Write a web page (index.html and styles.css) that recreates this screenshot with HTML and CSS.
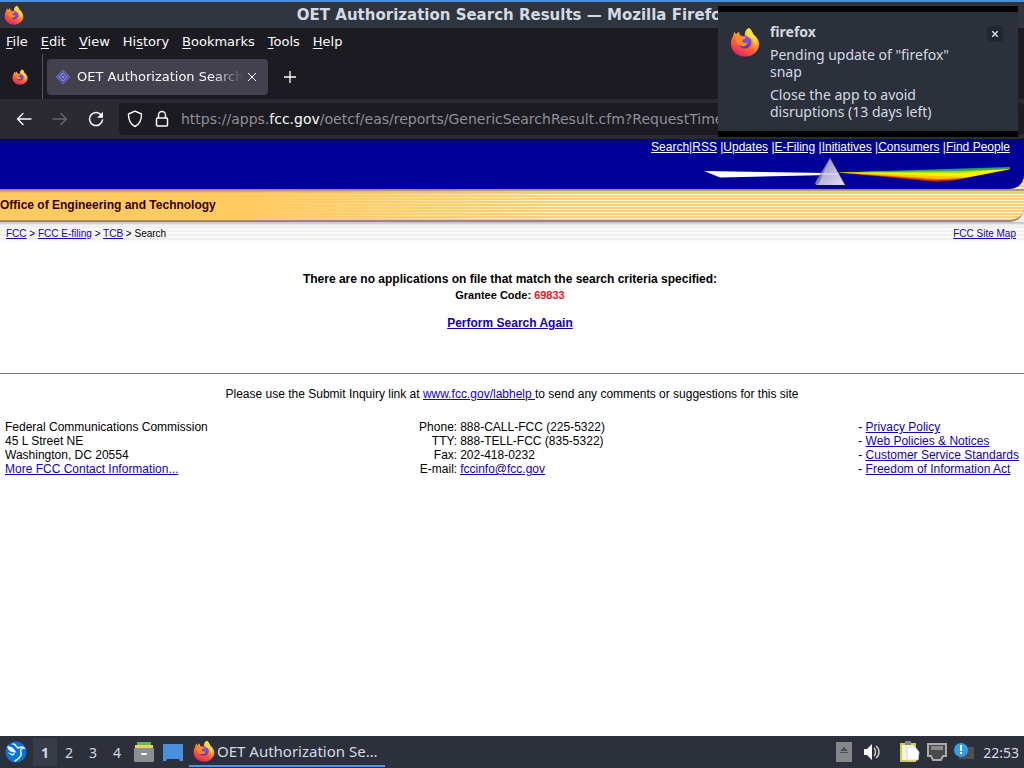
FILE: index.html
```html
<!DOCTYPE html>
<html lang="en">
<head>
    <meta charset="UTF-8">
    <meta name="viewport" content="width=device-width, initial-scale=1.0">
    <title>OET Authorization Search Results</title>
    <link rel="stylesheet" href="styles.css">
</head>
<body>
    <!-- shared firefox logo -->
    <svg class="defs" width="0" height="0" aria-hidden="true">
        <defs>
            <linearGradient id="flame" x1="0.8" y1="0.05" x2="0.3" y2="1">
                <stop offset="0" stop-color="#fff04a"/>
                <stop offset="0.35" stop-color="#ffa52e"/>
                <stop offset="0.65" stop-color="#ff5a36"/>
                <stop offset="1" stop-color="#e0206c"/>
            </linearGradient>
            <linearGradient id="globe" x1="0.7" y1="0" x2="0.3" y2="1">
                <stop offset="0" stop-color="#9a50e8"/>
                <stop offset="1" stop-color="#4a3fae"/>
            </linearGradient>
            <symbol id="firefox" viewBox="0 0 32 32">
                <path fill="url(#flame)" d="M20 1c2 1 4 4 4.500 6.500C28 10 31 14 31 18c0 7.500-6.500 13.500-15 13.500S1 25.500 1 17.500c0-3.500 1-6 2.500-8 0-2 .5-3.500 1.500-4.500 0 1 .5 2 1.500 2.500C7.500 7 8.500 5.500 10 5c-.3 1.500 0 3 1 4l5 1c-1-4 1-7.500 4-9z"/>
                <circle cx="16" cy="16" r="7" fill="url(#globe)"/>
                <path fill="#ff8a30" d="M6 9c2-1 5-.5 6.500 1 2 .2 4 0 5 1-1 2-4 2-4.500 3.500 0 2 3 3 6 2-1 3-4 5-8 3.500C7 18.500 5 13 6 9z"/>
                <path fill="#ffdc3c" d="M20 1c2 1 4 4 4.500 6.500 4 4 5 9 2 14 .5-4-1-7-4-9.500C19 10.500 14.500 9 20 1z"/>
            </symbol>
        </defs>
    </svg>

    <div class="titlebar">
        <svg class="app-icon"><use href="#firefox"/></svg>
        <span class="window-title">OET Authorization Search Results — Mozilla Firefox</span>
    </div>

    <nav class="menubar">
        <button><u>F</u>ile</button>
        <button><u>E</u>dit</button>
        <button><u>V</u>iew</button>
        <button>Hi<u>s</u>tory</button>
        <button><u>B</u>ookmarks</button>
        <button><u>T</u>ools</button>
        <button><u>H</u>elp</button>
    </nav>

    <div class="tabbar">
        <button class="view-btn" aria-label="Firefox View"><svg width="16" height="16"><use href="#firefox"/></svg></button>
        <div class="tab">
            <svg width="16" height="16" viewBox="0 0 16 16" fill="none" stroke="#6668bc">
                <path fill="#5658a8" d="M8 1l7 7-7 7-7-7z"/>
                <path stroke="#8688d8" d="M8 4l4 4-4 4-4-4zM8 7l1 1-1 1-1-1z"/>
            </svg>
            <span class="tab-title">OET Authorization Search</span>
            <button class="tab-close" aria-label="Close tab">
                <svg width="10" height="10" viewBox="0 0 10 10" stroke="#fbfbfe"><path d="M1 1l8 8M9 1l-8 8"/></svg>
            </button>
        </div>
        <button class="new-tab" aria-label="New tab">
            <svg width="12" height="12" viewBox="0 0 12 12" stroke="#fbfbfe" stroke-width="1.300"><path d="M6 0v12M0 6h12"/></svg>
        </button>
    </div>

    <div class="toolbar">
        <button aria-label="Back">
            <svg width="16" height="16" viewBox="0 0 16 16" fill="none" stroke="#fbfbfe" stroke-width="1.400" stroke-linecap="round" stroke-linejoin="round"><path d="M15 8H1.500M7 2.500L1.500 8 7 13.500"/></svg>
        </button>
        <button aria-label="Forward" disabled>
            <svg width="16" height="16" viewBox="0 0 16 16" fill="none" stroke="#66666f" stroke-width="1.400" stroke-linecap="round" stroke-linejoin="round"><path d="M1 8h13.500M9 2.500L14.500 8 9 13.500"/></svg>
        </button>
        <button aria-label="Reload">
            <svg width="16" height="16" viewBox="0 0 16 16" fill="none" stroke="#fbfbfe" stroke-width="1.500" stroke-linecap="round"><path d="M13.500 4.500A6.500 6.500 0 1 0 14.500 9"/><path fill="#fbfbfe" stroke="none" d="M15 .8v6H9z"/></svg>
        </button>
        <div class="urlbar">
            <svg width="16" height="18" viewBox="0 0 16 18" fill="none" stroke="#fbfbfe" stroke-width="1.400" stroke-linejoin="round"><path d="M8 1.200l6.500 2.800c.2 5.500-1.500 10-6.500 12.500C3 14 1.300 9.500 1.500 4z"/></svg>
            <svg width="14" height="18" viewBox="0 0 14 18" fill="none" stroke="#fbfbfe" stroke-width="1.500" stroke-linejoin="round"><rect x="1.500" y="8" width="11" height="8" rx="1"/><path d="M3.500 8V5a3.500 3.500 0 0 1 7 0v3"/></svg>
            <span class="url">https://apps.<b>fcc.gov</b>/oetcf/eas/reports/GenericSearchResult.cfm?RequestTimeout=500</span>
        </div>
    </div>

    <div class="page">
        <div class="banner">
            <header>
                <p><a href="#">Search</a>|<a href="#">RSS</a> |<a href="#">Updates</a> |<a href="#">E-Filing</a> |<a href="#">Initiatives</a> |<a href="#">Consumers</a> |<a href="#">Find People</a></p>
                <svg width="308" height="30" viewBox="0 0 308 30">
                    <defs>
                        <linearGradient id="glass" x1="0" y1="0" x2="1" y2="1">
                            <stop offset="0" stop-color="#8886a8"/>
                            <stop offset="0.55" stop-color="#bdb8dc"/>
                            <stop offset="1" stop-color="#e4dff0"/>
                        </linearGradient>
                    </defs>
                    <path fill="#fff" d="M2 14l16 6.500 108-2.500v-2z"/>
                    <!-- rays fan out of the prism, red at the bottom -->
                    <path fill="#a01818" d="M136 15.500l98 9.500 16-1 58-12z"/>
                    <path fill="#f06000" d="M136 15.500l95 8 23-1 54-10z"/>
                    <path fill="#ffc800" d="M136 15.500l100 6.500 26-1 46-9z"/>
                    <path fill="#f4f400" d="M136 15.500l130 4.500 42-8-60 1z"/>
                    <path fill="#a0e010" d="M136 15.500l122 .5 50-4.500-50 2z"/>
                    <path fill="#30a060" d="M136 15.500L308 10v2l-50 2z"/>
                    <path fill="url(#glass)" d="M128 1l15 27h-29z"/>
                    <path fill="#7e7ca6" d="M128 1l-11 25-3 2-1-2z"/>
                    <path stroke="#f0e4f4" d="M119 17h18"/>
                </svg>
            </header>
        </div>
        <div class="office-wrap">
            <h1>Office of Engineering and Technology</h1>
        </div>
        <div class="crumbs">
            <span><a href="#">FCC</a> &gt; <a href="#">FCC E-filing</a> &gt; <a href="#">TCB</a> &gt; Search</span>
            <a href="#">FCC Site Map</a>
        </div>

        <main>
            <h2>There are no applications on file that match the search criteria specified:</h2>
            <p class="code">Grantee Code: <span>69833</span></p>
            <a href="#">Perform Search Again</a>
        </main>

        <footer>
            <p>Please use the Submit Inquiry link at <a href="#">www.fcc.gov/labhelp </a>to send any comments or suggestions for this site</p>
            <div class="footer-cols">
                <address>
                    Federal Communications Commission<br>
                    45 L Street NE<br>
                    Washington, DC 20554<br>
                    <a href="#">More FCC Contact Information...</a>
                </address>
                <table>
                    <tr><th>Phone:</th><td>888-CALL-FCC (225-5322)</td></tr>
                    <tr><th>TTY:</th><td>888-TELL-FCC (835-5322)</td></tr>
                    <tr><th>Fax:</th><td>202-418-0232</td></tr>
                    <tr><th>E-mail:</th><td><a href="#">fccinfo@fcc.gov</a></td></tr>
                </table>
                <ul>
                    <li>- <a href="#">Privacy Policy</a></li>
                    <li>- <a href="#">Web Policies &amp; Notices</a></li>
                    <li>- <a href="#">Customer Service Standards</a></li>
                    <li>- <a href="#">Freedom of Information Act</a></li>
                </ul>
            </div>
        </footer>
    </div>

    <div class="taskbar">
        <button class="start" aria-label="Menu">
            <svg width="22" height="22" viewBox="0 0 22 22"><circle cx="11" cy="11" r="10.500" fill="#0a72d8"/><path fill="#f0f8ff" d="M2 5c4 0 7 2 9 6-1 1-2 1-3 0C5 11 3 9 2 5zM3 11c3 2 5 2 7 1l-1 2c-2 1-4 0-6-3z"/><path fill="none" stroke="#f0f8ff" stroke-width="1.500" stroke-linecap="round" d="M8 3c3 0 3 3 5 4 2-1 4-2 6 0-3 0-4 2-3 5s-1 5-6 8"/></svg>
        </button>
        <button class="desk active">1</button>
        <button class="desk">2</button>
        <button class="desk">3</button>
        <button class="desk">4</button>
        <button class="launcher" aria-label="Files">
            <svg width="20" height="20" viewBox="0 0 20 20"><path fill="#68b45a" d="M3 0h14v4H3z"/><path fill="#e8d35c" d="M1 3h18v3H1z"/><rect y="6" width="20" height="14" rx="1" fill="#8c8e90"/><rect x="7" y="11" width="6" height="2" rx="1" fill="#fff"/></svg>
        </button>
        <button class="launcher" aria-label="Show desktop">
            <svg width="20" height="17" viewBox="0 0 20 17"><path fill="#4a90dc" d="M0 0h20v17h-3l-1-2H4l-1 2H0z"/></svg>
        </button>
        <button class="task">
            <svg width="22" height="22"><use href="#firefox"/></svg>
            <span>OET Authorization Se…</span>
        </button>
        <div class="tray">
            <svg width="16" height="20" viewBox="0 0 16 20"><rect width="16" height="20" fill="#85878b"/><path fill="#4a4c52" d="M8 5l4 4H4zM4 10h8v1H4z"/></svg>
            <svg class="volume" width="16" height="16" viewBox="0 0 16 16"><path fill="#fff" d="M0 5h3l5-5v16l-5-5H0z"/><path fill="none" stroke="#ccc" stroke-width="1.500" d="M10 4c2 2 2 6 0 8M12 2c4 3 4 9 0 12"/></svg>
            <svg width="20" height="22" viewBox="0 0 20 22"><rect y="2" width="16" height="19" fill="#d2cf35"/><path fill="#f2f2e6" d="M2 4h12v15H2z"/><path fill="#888" d="M5 0h6v4H5z"/><path fill="#fff" stroke="#d8d8d8" d="M7 6h8l4 5-1 8H7z"/></svg>
            <svg width="20" height="18" viewBox="0 0 20 18"><path fill="#4a4a4a" stroke="#a9a9a9" stroke-width="2" d="M1 1h18v12h-3l-2 4H6l-2-4H1z"/><path stroke="#ccc" d="M5 3v4M7 3v4M9 3v4M11 3v4M13 3v4M15 3v4"/></svg>
            <svg width="20" height="18" viewBox="0 0 20 18"><path fill="#4a4f58" d="M5 4h15v12H5z"/><circle cx="7" cy="7" r="7" fill="#35a0e0"/><path fill="#fff" d="M6 2h2v6H6zM6 9h2v2H6z"/></svg>
            <time>22:53</time>
        </div>
    </div>

    <div class="notification">
        <svg width="30" height="30"><use href="#firefox"/></svg>
        <div class="notice-text">
            <strong>firefox</strong>
            <p>Pending update of "firefox" snap</p>
            <p>Close the app to avoid disruptions (13 days left)</p>
        </div>
        <button aria-label="Dismiss">
            <svg width="6" height="6" viewBox="0 0 6 6" stroke="#d3dae3" stroke-width="1.500"><path d="M0 0l6 6M6 0L0 6"/></svg>
        </button>
    </div>
</body>
</html>
```
FILE: styles.css
```css
* {
    margin: 0;
    padding: 0;
    box-sizing: border-box;
}

body {
    min-height: 100vh;
    display: flex;
    flex-direction: column;
    background: #fff;
    font-family: "Noto Sans", sans-serif;
    font-size: 14px;
    color: #fbfbfe;
}

button {
    background: none;
    border: none;
    color: inherit;
    font: inherit;
}

svg {
    display: block;
    flex: none;
}

.defs {
    position: absolute;
}

/* window chrome */
.titlebar {
    height: 28px;
    display: flex;
    align-items: center;
    padding: 0 20px 0 4px;
    border-top: 2px solid #4a90d9;
    background: #2f343f;
}

.app-icon {
    width: 20px;
    height: 20px;
}

.window-title {
    flex: 1;
    text-align: center;
    font: bold 15px/20px "DejaVu Sans", sans-serif;
    color: #d3dae3;
    white-space: nowrap;
}

.menubar {
    display: flex;
    gap: 13px;
    height: 26px;
    padding-left: 6px;
    background: #1c1b22;
    font-family: "DejaVu Sans", sans-serif;
    font-size: 13px;
}

.menubar u {
    text-underline-offset: 2px;
}

.tabbar {
    display: flex;
    align-items: center;
    height: 45px;
    background: #1c1b22;
}

.view-btn {
    height: 45px;
    padding: 0 14px 0 12px;
    border-right: 1px solid #55545c;
}

.tab {
    display: flex;
    align-items: center;
    width: 221px;
    height: 36px;
    margin-left: 4px;
    padding: 0 8px;
    background: #42414d;
    border-radius: 4px;
}

.tab-title {
    flex: 1;
    margin-left: 6px;
    white-space: nowrap;
    font-family: "DejaVu Sans", sans-serif;
    font-size: 13px;
    -webkit-mask-image: linear-gradient(to left, transparent, #000 32px);
    mask-image: linear-gradient(to left, transparent, #000 32px);
}

.tab-close {
    padding: 3px;
}

.new-tab {
    padding: 10px 16px;
}

.toolbar {
    display: flex;
    align-items: center;
    height: 40px;
    background: #2b2a33;
}

.toolbar button {
    width: 36px;
    padding: 10px;
}

.toolbar button:first-child {
    margin-left: 6px;
}

.urlbar {
    flex: 1;
    display: flex;
    align-items: center;
    gap: 12px;
    height: 32px;
    min-width: 0;
    margin-left: 5px;
    padding-left: 8px;
    background: #1c1b22;
    border-radius: 4px;
}

.url {
    overflow: hidden;
    white-space: nowrap;
    font-family: "DejaVu Sans", sans-serif;
    color: #8f8f97;
}

.url b {
    font-weight: normal;
    color: #fbfbfe;
}

/* fcc page */
.page {
    flex: 1;
    background: #fff;
    color: #000;
    font: 12px/14px "Liberation Sans", Arial, sans-serif;
}

.page a {
    color: #1400b4;
}

.banner {
    background: repeating-linear-gradient(#fff2cc 0 2px, #fbcf70 2px 4px);
}

header {
    display: flex;
    flex-direction: column;
    align-items: flex-end;
    height: 50px;
    padding: 1px 14px 0 0;
    background: #000099;
    border-bottom-right-radius: 14px;
    color: #fff;
}

header svg {
    margin-top: 3px;
}

.page header a {
    color: #fff;
}

.office-wrap {
    background: #eee;
}

h1 {
    height: 33px;
    font-size: 12px;
    line-height: 32px;
    background:
        linear-gradient(#00006666, transparent 4px),
        linear-gradient(to right, #ffca60 240px, #ffca6000 560px),
        repeating-linear-gradient(#fbd27a 0 2px, #fff2cc 2px 3px);
    border-bottom: 2px solid #a08870;
    border-bottom-right-radius: 14px;
    color: #330000;
}

.crumbs {
    display: flex;
    justify-content: space-between;
    padding: 5px 8px 0 6px;
    font-size: 10px;
    background:
        linear-gradient(#00000033, transparent 4px),
        repeating-linear-gradient(#f0f0f0 0 2px, #fafafa 2px 4px);
}

main {
    padding: 31px 4px 43px 0;
    text-align: center;
    font-weight: bold;
}

h2 {
    font-size: 12px;
}

.code {
    margin: 2px 0 14px;
    font-size: 11px;
}

.code span {
    color: #e8141c;
}

footer {
    padding: 13px 5px;
    border-top: 1px solid #777;
    text-align: center;
}

.footer-cols {
    display: grid;
    grid-template-columns: 1fr auto 1fr;
    margin-top: 19px;
    text-align: left;
}

address {
    font-style: normal;
}

.page table {
    border-collapse: collapse;
}

th {
    padding-right: 3px;
    font-weight: normal;
    text-align: right;
}

ul {
    justify-self: end;
    list-style: none;
}

/* bottom panel */
.taskbar {
    display: flex;
    align-items: center;
    height: 32px;
    padding: 0 5px;
    background: #2b303b;
    color: #d3dae3;
}

.desk {
    width: 24px;
    height: 28px;
}

.start {
    margin-right: 6px;
}

.desk.active {
    background: #373c48;
    font-weight: bold;
}

.launcher {
    padding: 0 4px 0 5px;
}

.task {
    display: flex;
    align-items: center;
    height: 30px;
    width: 196px;
    margin-left: 2px;
    padding-left: 4px;
    gap: 2px;
    border-bottom: 2px solid #5294e2;
    font-size: 15px;
}

.tray {
    display: flex;
    align-items: center;
    gap: 7px;
    margin-left: auto;
}

.volume {
    margin: 0 13px 0 5px;
}

.tray time {
    margin-left: 2px;
}

/* popup over the window */
.notification {
    position: absolute;
    top: 6px;
    right: 6px;
    display: flex;
    width: 300px;
    padding: 11px 15px 11px 12px;
    background: #2b303b;
    border-top: 6px solid #000;
    border-bottom: 6px solid #000;
    color: #d3dae3;
    line-height: 17px;
}

.notification > svg {
    margin-top: 4px;
}

.notice-text {
    flex: 1;
    margin: 0 20px 0 10px;
}

.notice-text p {
    margin-top: 6px;
}

.notification button {
    align-self: flex-start;
    margin-top: 3px;
    padding: 5px;
    background: #22262f;
    border-radius: 4px;
}
```
